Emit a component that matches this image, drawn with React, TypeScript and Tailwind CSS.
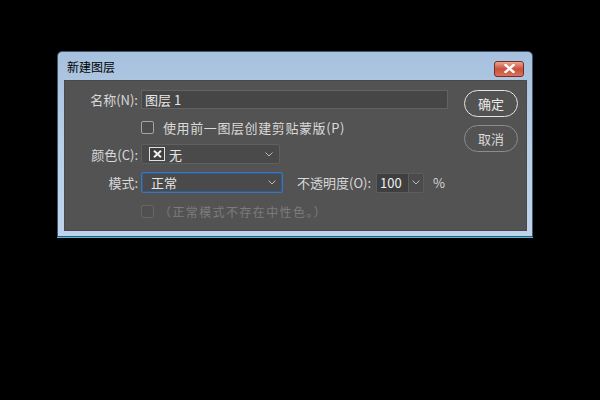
import React from "react";

const Chevron = ({ className = "" }: { className?: string }) => (
  <svg width="8" height="5" viewBox="0 0 8 5" className={className}>
    <polyline points="0.5,0.5 4,4 7.5,0.5" fill="none" stroke="#b8b8b8" strokeWidth="1" />
  </svg>
);

const font = { fontFamily: '"Noto Sans CJK SC", "Noto Sans", sans-serif' };

export default function App() {
  return (
    <div className="w-[600px] h-[400px] bg-black pt-[51px] pl-[57px]" style={font}>
      <div className="w-[476px] h-[186px] flex flex-col rounded-t-[5px] border border-[#44556a] bg-gradient-to-b from-[#a6c1de] via-[#b8cfe8] to-[#bdd4ec] shadow-[0_1px_0_#3fc0e8]">
        {/* Title bar */}
        <div className="h-[28px] flex items-center justify-between pl-[9px] pr-[8px]">
          <span className="text-[12px] text-black leading-none mt-[2px]">新建图层</span>
          <div className="w-[30px] h-[16px] mt-[5px] rounded-[3px] border border-[#7b2c20] bg-gradient-to-b from-[#e9a592] via-[#c9503d] to-[#d6735c] flex items-center justify-center">
            <svg width="11" height="9" viewBox="0 0 11 9">
              <path d="M1.5 1 L9.5 8 M9.5 1 L1.5 8" stroke="#ffffff" strokeWidth="2.4" strokeLinecap="square" />
            </svg>
          </div>
        </div>
        {/* Panel */}
        <div className="flex-1 mr-[5px] mb-[5px] ml-[6px] bg-[#535353] border border-[#4a4a4a] flex">
          <div className="flex flex-col pt-[9px] w-[398px]">
            {/* Name */}
            <div className="flex items-center h-[19px]">
              <span className="w-[73px] text-right text-[13px] text-[#d8d8d8] leading-none">名称(N):</span>
              <div className="ml-[3px] w-[307px] h-[19px] bg-[#464646] border border-[#636363] flex items-center px-[3px] text-[13px] text-[#e8e8e8] leading-none">
                图层 1
              </div>
            </div>
            {/* clip checkbox */}
            <div className="flex items-center h-[14px] mt-[11px]">
              <div className="ml-[76px] w-[13px] h-[13px] rounded-[2px] border border-[#a6a6a6] bg-[#4d4d4d]" />
              <span className="ml-[9px] text-[13px] text-[#dadada] leading-none tracking-[0.6px]">使用前一图层创建剪贴蒙版(P)</span>
            </div>
            {/* Color */}
            <div className="flex items-center h-[20px] mt-[10px]">
              <span className="w-[73px] text-right text-[13px] text-[#d8d8d8] leading-none">颜色(C):</span>
              <div className="ml-[3px] w-[139px] h-[20px] bg-[#4a4a4a] border border-[#5f5f5f] rounded-[2px] flex items-center pl-[7px] pr-[6px]">
                <div className="w-[16px] h-[14px] border border-[#e0e0e0] flex items-center justify-center bg-[#3e3e3e]">
                  <svg width="9" height="8" viewBox="0 0 9 8">
                    <path d="M1 0.8 L8 7.2 M8 0.8 L1 7.2" stroke="#f0f0f0" strokeWidth="2" />
                  </svg>
                </div>
                <span className="ml-[4px] text-[13px] text-[#e6e6e6] leading-none">无</span>
                <div className="flex-1" />
                <Chevron />
              </div>
            </div>
            {/* Mode */}
            <div className="flex items-center h-[21px] mt-[8px]">
              <span className="w-[73px] text-right text-[13px] text-[#d8d8d8] leading-none">模式:</span>
              <div className="ml-[3px] w-[142px] h-[21px] bg-[#4a4a4a] border border-[#3d76b8] rounded-[2px] flex items-center pl-[9px] pr-[6px] shadow-[inset_0_0_0_1px_#2f5d93]">
                <span className="text-[13px] text-[#e6e6e6] leading-none">正常</span>
                <div className="flex-1" />
                <Chevron />
              </div>
              <span className="ml-[14px] text-[13px] text-[#d8d8d8] leading-none">不透明度(O):</span>
              <div className="ml-[5px] flex h-[20px] border border-[#5c5c5c] rounded-[2px]">
                <div className="w-[31px] bg-[#3f3f3f] flex items-center pl-[3px] text-[13px] text-[#eeeeee] leading-none">100</div>
                <div className="w-[15px] bg-[#4b4b4b] border-l border-[#5c5c5c] flex items-center justify-center">
                  <Chevron />
                </div>
              </div>
              <span className="ml-[9px] text-[13px] text-[#d8d8d8] leading-none">%</span>
            </div>
            {/* disabled checkbox */}
            <div className="flex items-center h-[15px] mt-[11px]">
              <div className="ml-[76px] w-[13px] h-[13px] rounded-[2px] border border-[#666666] bg-[#505050]" />
              <span className="ml-[5px] text-[12px] text-[#7c7c7c] leading-none tracking-[1.4px]">（正常模式不存在中性色。）</span>
            </div>
          </div>
          {/* Buttons */}
          <div className="flex flex-col pt-[9px] pl-[1px]">
            <button className="w-[54px] h-[27px] rounded-full border-[1.5px] border-[#e4e4e4] text-[13px] text-[#eaeaea] leading-none bg-[#535353]">
              确定
            </button>
            <button className="mt-[8px] w-[54px] h-[27px] rounded-full border border-[#8c8c8c] text-[13px] text-[#dadada] leading-none bg-[#535353]">
              取消
            </button>
          </div>
        </div>
      </div>
    </div>
  );
}
